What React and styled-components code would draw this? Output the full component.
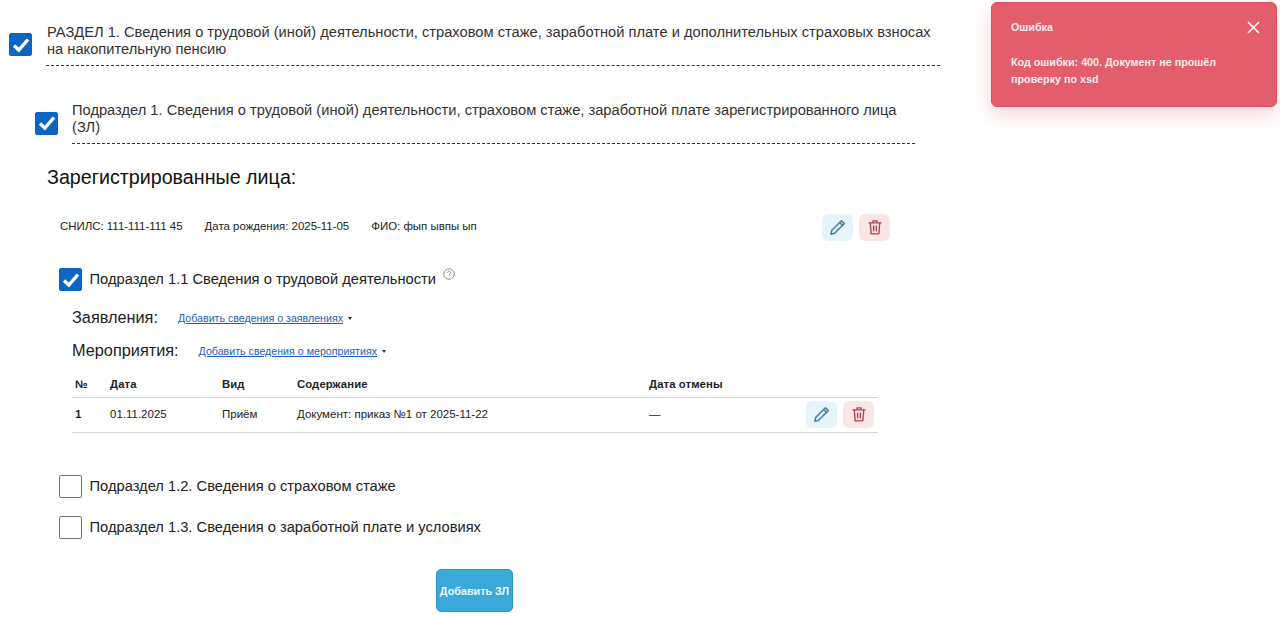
import React from "react";
import styled, { createGlobalStyle } from "styled-components";

const Global = createGlobalStyle`
  html, body { margin: 0; padding: 0; background: #fff; }
  body { font-family: "Liberation Sans", Arial, sans-serif; color: #111; overflow: hidden; }
`;

const Page = styled.div`
  width: 1280px;
  height: 618px;
  position: relative;
  overflow: hidden;
  padding: 23px 0 0 9px;
  box-sizing: border-box;
`;

const Row = styled.div`
  display: flex;
  align-items: ${(p) => p.$align || "center"};
  margin-left: ${(p) => p.$ml || 0}px;
  margin-top: ${(p) => p.$mt || 0}px;
  width: ${(p) => (p.$w ? `${p.$w}px` : "auto")};
`;

const BoxEl = styled.span`
  flex: none;
  width: 23px;
  height: 23px;
  box-sizing: border-box;
  border-radius: 2px;
  display: flex;
  align-items: center;
  justify-content: center;
  background: ${(p) => (p.$on ? "#0a66c2" : "#fff")};
  border: 1px solid ${(p) => (p.$on ? "#0a66c2" : "#767676")};
`;

const Check = ({ on }) => (
  <BoxEl $on={on}>
    {on && (
      <svg width="18" height="16" viewBox="0 0 18 16">
        <path d="M2 8.5 L6.8 13 L16 2.5" fill="none" stroke="#fff" strokeWidth="3.4" />
      </svg>
    )}
  </BoxEl>
);

const DashedTitle = styled.div`
  margin-left: ${(p) => p.$gap}px;
  padding-left: ${(p) => p.$inset || 0}px;
  padding-top: ${(p) => p.$top || 0}px;
  flex: 1;
  font-size: 14.68px;
  line-height: 17px;
  color: #333;
  padding-bottom: 7px;
  border-bottom: 1px dashed #333;
`;

const Heading = styled.h2`
  margin: 21px 0 0 38px;
  font-size: 19.7px;
  line-height: 24px;
  font-weight: 400;
  color: #111;
`;

const PersonRow = styled.div`
  display: flex;
  align-items: center;
  margin: 25px 0 0 51px;
  width: 830px;
  height: 27px;
  font-size: 11.45px;
  color: #222;
`;

const PersonField = styled.span`
  margin: 0 22px 3px 0;
`;

const Actions = styled.div`
  display: flex;
  gap: 6px;
  margin-left: auto;
`;

const IconBtn = styled.span`
  width: 31px;
  height: 27px;
  border-radius: 6px;
  display: flex;
  align-items: center;
  justify-content: center;
  background: ${(p) => (p.$danger ? "#fbe6e7" : "#e6f5fb")};
  color: ${(p) => (p.$danger ? "#b04650" : "#4a7f99")};
`;

const Pencil = () => (
  <svg width="17" height="17" viewBox="0 0 24 24" fill="none" stroke="currentColor" strokeWidth="2.1" strokeLinejoin="round" strokeLinecap="round">
    <path d="M17.5 2.5 L21.5 6.5 L8 20 L2.5 21.5 L4 16 Z" />
    <path d="M15 5 L19 9" />
  </svg>
);

const Trash = () => (
  <svg width="16" height="17" viewBox="0 0 24 24" fill="none" stroke="currentColor" strokeWidth="2.1" strokeLinejoin="round" strokeLinecap="round">
    <path d="M3 5 H21" />
    <path d="M9 4.5 V2 H15 V4.5" />
    <path d="M5 5.5 L6.2 21.5 H17.8 L19 5.5" />
    <path d="M10 10 V17 M14 10 V17" />
  </svg>
);

const CheckLabel = styled.span`
  margin-left: 7.5px;
  font-size: 14.7px;
  line-height: 17px;
  color: #222;
`;

const Help = styled.svg`
  width: 12px;
  height: 12px;
  margin: -11px 0 0 7px;
  flex: none;
`;

const LinkRow = styled.div`
  display: flex;
  align-items: center;
  margin: ${(p) => p.$mt}px 0 0 63px;
  height: 19px;
`;

const RowLabel = styled.span`
  font-size: 16.3px;
  color: #222;
  margin-right: 20px;
`;

const AddLink = styled.a`
  font-size: 10.65px;
  color: #1a62b4;
  text-decoration: underline;
  margin-top: 1px;
`;

const Caret = styled.span`
  margin-left: 5px;
  margin-top: 1px;
  width: 0;
  height: 0;
  border-left: 2.5px solid transparent;
  border-right: 2.5px solid transparent;
  border-top: 3px solid #333;
`;

const Table = styled.table`
  margin: 11px 0 0 63px;
  width: 806px;
  border-collapse: collapse;
  table-layout: fixed;
  font-size: 11.5px;
  color: #222;
`;

const Th = styled.th`
  text-align: left;
  font-size: 11.3px;
  font-weight: 700;
  height: 26px;
  padding: 0 3px;
  letter-spacing: 0.1px;
  border-bottom: 1px solid #d8d8d8;
`;

const Td = styled.td`
  height: 32px;
  padding: 0 3px 2px;
  border-bottom: 1px solid #d8d8d8;
  font-weight: ${(p) => (p.$bold ? 700 : 400)};
`;

const CellActions = styled(Actions)`
  justify-content: flex-end;
  margin-right: 1px;
`;

const AddBtn = styled.button`
  display: block;
  margin: 30px 0 0 427px;
  width: 77px;
  height: 43px;
  padding: 0;
  background: #3aa8d8;
  border: 1px solid #2e98c8;
  border-radius: 5px;
  color: #eef8fc;
  font: 700 10.8px "Liberation Sans", Arial, sans-serif;
`;

const Toast = styled.div`
  position: absolute;
  left: 991px;
  top: 2px;
  width: 286px;
  height: 105px;
  box-sizing: border-box;
  padding: 16px 16px 16px 19px;
  background: #e35d6a;
  border: 1px solid #d9505e;
  border-radius: 6px;
  box-shadow: 0 8px 20px rgba(227, 93, 106, 0.25);
  color: #fdeeee;
  font-size: 10.75px;
  font-weight: 700;
  line-height: 17px;
`;

const ToastHead = styled.div`
  display: flex;
  justify-content: space-between;
  align-items: center;
  margin-bottom: 18px;
`;

const ToastText = styled.div`
  width: 225px;
`;

const actions = (
  <>
    <IconBtn><Pencil /></IconBtn>
    <IconBtn $danger><Trash /></IconBtn>
  </>
);

export default function App() {
  return (
    <Page>
      <Global />
      <Row $align="center" $w={931}>
        <Check on />
        <DashedTitle $gap={14} $inset={1} $top={1}>
          РАЗДЕЛ 1. Сведения о трудовой (иной) деятельности, страховом стаже, заработной плате и дополнительных страховых взносах на накопительную пенсию
        </DashedTitle>
      </Row>
      <Row $align="center" $ml={26} $mt={36} $w={880}>
        <Check on />
        <DashedTitle $gap={14}>
          Подраздел 1. Сведения о трудовой (иной) деятельности, страховом стаже, заработной плате зарегистрированного лица (ЗЛ)
        </DashedTitle>
      </Row>
      <Heading>Зарегистрированные лица:</Heading>
      <PersonRow>
        <PersonField>СНИЛС: 111-111-111 45</PersonField>
        <PersonField>Дата рождения: 2025-11-05</PersonField>
        <PersonField>ФИО: фып ывпы ып</PersonField>
        <Actions>{actions}</Actions>
      </PersonRow>
      <Row $ml={50} $mt={27}>
        <Check on />
        <CheckLabel>Подраздел 1.1 Сведения о трудовой деятельности</CheckLabel>
        <Help viewBox="0 0 24 24" fill="none" stroke="#777" strokeWidth="1.6">
          <circle cx="12" cy="12" r="10.5" />
          <path d="M8.8 9.5 a3.2 3.2 0 1 1 5 2.7 c-1.2 .8 -1.8 1.3 -1.8 2.8" />
          <path d="M12 17.5 v1.5" />
        </Help>
      </Row>
      <LinkRow $mt={17}>
        <RowLabel>Заявления:</RowLabel>
        <AddLink>Добавить сведения о заявлениях </AddLink>
        <Caret />
      </LinkRow>
      <LinkRow $mt={14}>
        <RowLabel>Мероприятия:</RowLabel>
        <AddLink>Добавить сведения о мероприятиях </AddLink>
        <Caret />
      </LinkRow>
      <Table>
        <colgroup>
          <col width="35" />
          <col width="112" />
          <col width="75" />
          <col width="352" />
          <col width="156" />
          <col width="76" />
        </colgroup>
        <thead>
          <tr>
            <Th>№</Th>
            <Th>Дата</Th>
            <Th>Вид</Th>
            <Th>Содержание</Th>
            <Th>Дата отмены</Th>
            <Th />
          </tr>
        </thead>
        <tbody>
          <tr>
            <Td $bold>1</Td>
            <Td>01.11.2025</Td>
            <Td>Приём</Td>
            <Td>Документ: приказ №1 от 2025-11-22</Td>
            <Td>—</Td>
            <Td><CellActions>{actions}</CellActions></Td>
          </tr>
        </tbody>
      </Table>
      <Row $ml={50} $mt={42}>
        <Check />
        <CheckLabel>Подраздел 1.2. Сведения о страховом стаже</CheckLabel>
      </Row>
      <Row $ml={50} $mt={18}>
        <Check />
        <CheckLabel>Подраздел 1.3. Сведения о заработной плате и условиях</CheckLabel>
      </Row>
      <AddBtn>Добавить ЗЛ</AddBtn>
      <Toast>
        <ToastHead>
          <span>Ошибка</span>
          <svg width="13" height="13" viewBox="0 0 13 13">
            <path d="M1 1 L12 12 M12 1 L1 12" stroke="#fff" strokeWidth="1.6" fill="none" />
          </svg>
        </ToastHead>
        <ToastText>Код ошибки: 400. Документ не прошёл проверку по xsd</ToastText>
      </Toast>
    </Page>
  );
}
